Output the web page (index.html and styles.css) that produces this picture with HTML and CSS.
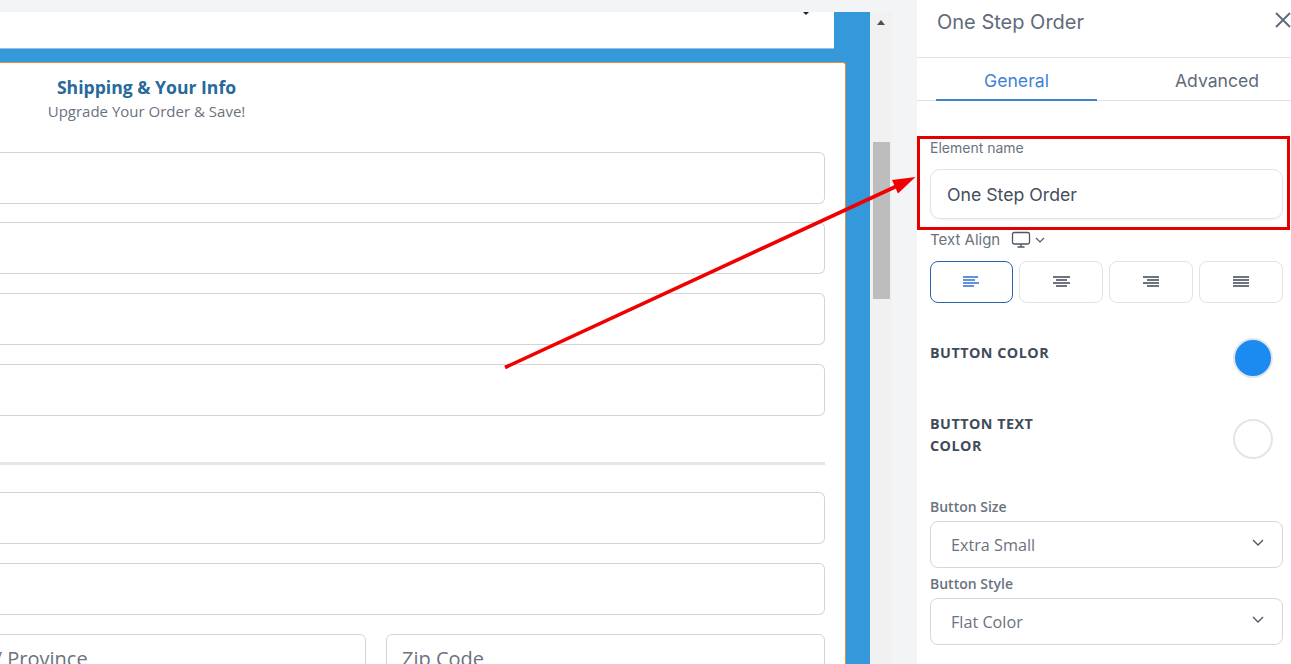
FILE: index.html
```html
<!DOCTYPE html>
<html lang="en">
<head>
<meta charset="utf-8">
<title>One Step Order</title>
<link rel="stylesheet" href="styles.css">
</head>
<body>
<div class="app">
  <div class="stage">
    <div class="strip"></div>
    <div class="stage-row">
      <main class="canvas">
        <div class="topblock"><span class="caret"></span></div>
        <section class="card">
          <header class="card-head">
            <h2>Shipping &amp; Your Info</h2>
            <p>Upgrade Your Order &amp; Save!</p>
          </header>
          <div class="field f1"></div>
          <div class="field f2"></div>
          <div class="field f3"></div>
          <div class="field f2"></div>
          <hr class="rule">
          <div class="field"></div>
          <div class="field f2"></div>
          <div class="field-row">
            <div class="field half state">State / Province</div>
            <div class="field half zip">Zip Code</div>
          </div>
        </section>
      </main>
      <div class="scrollbar">
        <span class="up"></span>
        <span class="thumb"></span>
      </div>
    </div>
  </div>
  <aside class="panel">
    <div class="panel-head">
      <h1>One Step Order</h1>
      <svg class="close" viewBox="0 0 16 16" width="16" height="16"><path d="M1 1l14 14M15 1L1 15" stroke="#5f6b7a" stroke-width="1.9" fill="none"/></svg>
    </div>
    <nav class="tabs">
      <span class="tab active">General</span>
      <span class="tab other">Advanced</span>
    </nav>
    <div class="panel-body">
      <label class="lbl-name">Element name</label>
      <div class="name-input">One Step Order</div>
      <div class="align-label">
        <span>Text Align</span>
        <svg viewBox="0 0 20 18" width="20" height="18"><rect x="1.5" y="1.5" width="17" height="11.5" rx="1.8" fill="none" stroke="#4b5563" stroke-width="1.3"/><path d="M6.5 16h7M10 13v3" stroke="#4b5563" stroke-width="1.3" fill="none"/></svg>
        <svg viewBox="0 0 10 6" width="10" height="6"><path d="M1 1l4 4 4-4" stroke="#4b5563" stroke-width="1.1" fill="none"/></svg>
      </div>
      <div class="align-row">
        <button class="al sel"><svg viewBox="0 0 16 12" width="16" height="12"><path d="M0 1h15M0 4h12M0 7h16M0 10h11" stroke="#2f6fd0" stroke-width="1.6"/></svg></button>
        <button class="al"><svg viewBox="0 0 17 12" width="17" height="12"><path d="M0 1h17M3 4h11M0 7h17M3 10h11" stroke="#3f4754" stroke-width="1.6"/></svg></button>
        <button class="al"><svg viewBox="0 0 16 12" width="16" height="12"><path d="M0 1h16M4 4h12M0 7h16M4 10h12" stroke="#3f4754" stroke-width="1.6"/></svg></button>
        <button class="al"><svg viewBox="0 0 16 12" width="16" height="12"><path d="M0 1h16M0 4h16M0 7h16M0 10h16" stroke="#3f4754" stroke-width="1.6"/></svg></button>
      </div>
      <div class="color-row first">
        <span class="color-name">BUTTON COLOR</span>
        <span class="swatch blue"></span>
      </div>
      <div class="color-row second">
        <span class="color-name">BUTTON TEXT<br>COLOR</span>
        <span class="swatch white"></span>
      </div>
      <div class="sel-label size">Button Size</div>
      <div class="select">Extra Small<svg viewBox="0 0 12 7" width="12" height="7"><path d="M1 1l5 5 5-5" stroke="#4b5563" stroke-width="1.3" fill="none"/></svg></div>
      <div class="sel-label style">Button Style</div>
      <div class="select">Flat Color<svg viewBox="0 0 12 7" width="12" height="7"><path d="M1 1l5 5 5-5" stroke="#4b5563" stroke-width="1.3" fill="none"/></svg></div>
    </div>
  </aside>
</div>
<div class="redbox"></div>
<svg class="arrow" viewBox="0 0 1291 664" width="1291" height="664">
  <path d="M505 367.5L897 186" stroke="#f00000" stroke-width="3.6" fill="none"/>
  <path d="M915.5 177L892 180L898 193.5Z" fill="#f00000"/>
</svg>
</body>
</html>
```
FILE: styles.css
```css
* { box-sizing: border-box; }
html, body { margin: 0; padding: 0; height: 664px; overflow: hidden; background: #fff; }
body { font-family: "Open Sans", sans-serif; }
.app { display: flex; width: 1291px; height: 664px; overflow: hidden; }

.stage { width: 917px; flex: none; display: flex; flex-direction: column; background: #f3f4f6; }
.strip { height: 12px; flex: none; }
.stage-row { display: flex; flex: 1; min-height: 0; }
.canvas { width: 870px; flex: none; background: #3498db; overflow: hidden; }
.topblock { width: 834px; height: 37px; background: #fff; border-bottom: 1px solid #8ec1e8; position: relative; }
.caret { position: absolute; left: 803px; top: 0; width: 0; height: 0; border-left: 3px solid transparent; border-right: 3px solid transparent; border-top: 3px solid #222; }
.card { width: 846px; margin-top: 13px; height: 640px; background: #fff; border: 1px solid #e08f3c; border-left: 0; border-bottom: 0; border-top-right-radius: 3px; padding-right: 20px; }
.card-head { width: 293px; text-align: center; padding-top: 12px; height: 89px; }
.card-head h2 { margin: 0; font-size: 17.6px; line-height: 25px; font-weight: 700; color: #27699a; }
.card-head p { margin: 0; font-size: 15px; line-height: 23px; color: #6b7280; }
.field { height: 52px; border: 1px solid #d4d4d4; border-left: 0; border-radius: 0 6px 6px 0; background: #fff; margin-bottom: 19px; }
.f1 { margin-bottom: 18px; }
.f3 { margin-bottom: 19px; }
.f2 { margin-bottom: 19px; }
.rule { height: 3px; border: 0; margin: 46px 0 27px; background: #e6e6e6; }
.field-row { display: flex; gap: 20px; margin-left: -74px; }
.half { margin: 0; border: 1px solid #d4d4d4; border-radius: 6px; padding: 10px 15px; font-size: 20px; line-height: 28px; color: #6b7280; }
.state { width: 440px; flex: none; }
.zip { flex: 1; }

.scrollbar { width: 22px; flex: none; background: #f1f1f1; position: relative; }
.up { position: absolute; left: 7px; top: 8px; width: 0; height: 0; border-left: 4.5px solid transparent; border-right: 4.5px solid transparent; border-bottom: 5px solid #505050; }
.thumb { position: absolute; left: 3px; top: 130px; width: 17px; height: 157px; background: #bdbdbd; }

.panel { width: 374px; flex: none; background: #fff; font-family: Inter, sans-serif; }
.panel-head { height: 58px; border-bottom: 1px solid #e1e3e6; display: flex; justify-content: space-between; padding: 10px 0 0 20px; position: relative; }
.panel-head h1 { margin: 0; font-size: 20px; line-height: 24px; font-weight: 400; color: #5f6b7a; }
.close { position: absolute; right: 0; top: 12px; }
.tabs { height: 43px; border-bottom: 1px solid #dfe1e5; display: flex; padding-left: 19px; }
.tab { flex: none; font-size: 17.6px; line-height: 22px; padding-top: 12px; text-align: center; }
.active { width: 161px; color: #3f82d6; border-bottom: 2px solid #3a85cf; height: 43px; }
.other { width: 240px; color: #5f6b7a; }
.panel-body { padding: 39px 8px 0 13px; }
.lbl-name { display: block; font-size: 14px; line-height: 16px; color: #6b7280; }
.name-input { margin-top: 13px; height: 50px; border: 1px solid #e2e3e6; border-radius: 10px; font-size: 17.7px; line-height: 49px; padding-left: 16px; color: #454e5c; box-shadow: 0 1px 2px rgba(0,0,0,.06); }
.align-label { margin-top: 12px; height: 18px; display: flex; align-items: center; font-size: 15px; line-height: 16px; color: #6b7280; }
.align-label svg:first-of-type { margin-left: 11px; }
.align-label svg:last-of-type { margin-left: 4px; }
.align-row { margin-top: 12px; display: flex; gap: 6px; }
.al { flex: 1; height: 42px; padding: 0; display: flex; align-items: center; justify-content: center; background: #fff; border: 1px solid #e2e3e6; border-radius: 8px; }
.sel { border-color: #2c62ad; flex: none; width: 83px; }
.sel svg { margin-left: -2px; }
.color-row { display: flex; justify-content: space-between; padding-right: 10px; }
.first { margin-top: 35px; height: 40px; }
.second { margin-top: 41px; height: 40px; align-items: flex-start; }
.color-name { font-family: "Open Sans", sans-serif; font-weight: 700; font-size: 14.3px; line-height: 22px; letter-spacing: .5px; color: #414b5a; margin-top: 4px; }
.first .color-name { margin-top: 4px; }
.second .color-name { margin-top: -6px; }
.swatch { width: 40px; height: 40px; border-radius: 50%; flex: none; border: 2px solid #e3e5ea; }
.blue { background: #1b8af1; }
.white { background: #fff; }
.sel-label { font-family: "Open Sans", sans-serif; font-weight: 600; font-size: 14px; line-height: 18px; color: #6b7280; }
.size { margin-top: 39px; }
.style { margin-top: 7px; }
.select { margin-top: 5px; height: 47px; border: 1px solid #d5d7dc; border-radius: 8px; display: flex; align-items: center; justify-content: space-between; padding: 0 18px 0 20px; font-family: "Open Sans", sans-serif; font-size: 16.2px; color: #6b7280; }
.select svg { margin-top: -4px; }

.redbox { position: absolute; left: 917px; top: 136px; width: 373px; height: 94px; border: 3px solid #e30000; }
.arrow { position: absolute; left: 0; top: 0; pointer-events: none; }
```
